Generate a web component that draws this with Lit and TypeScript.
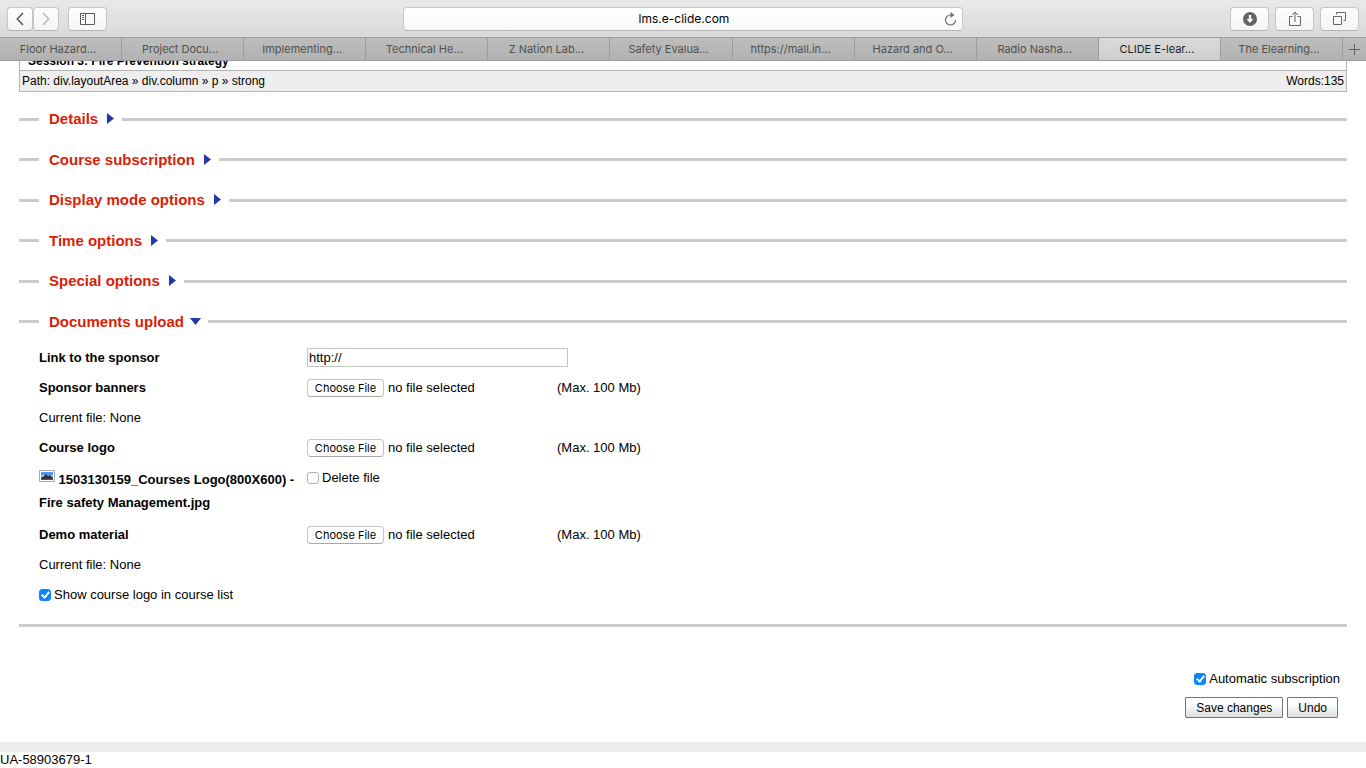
import { LitElement, html, css, svg } from "lit";
import { customElement, property } from "lit/decorators.js";

const tabs = [
  "Floor Hazard...",
  "Project Docu...",
  "Implementing...",
  "Technical He...",
  "Z Nation Lab...",
  "Safety Evalua...",
  "https://mall.in...",
  "Hazard and O...",
  "Radio Nasha...",
  "CLIDE E-lear...",
  "The Elearning...",
];
const activeTab = 9;

const sections = [
  "Details",
  "Course subscription",
  "Display mode options",
  "Time options",
  "Special options",
  "Documents upload",
];

@customElement("browser-bar")
export class BrowserBar extends LitElement {
  static styles = css`
    :host {
      display: block;
      font-family: Inter, Roboto, sans-serif;
    }
    .toolbar {
      display: grid;
      grid-template-columns: 1fr minmax(0, 560px) 1fr;
      align-items: center;
      box-sizing: border-box;
      height: 37px;
      padding: 0 7px;
      background: linear-gradient(#e9e9e9, #d9d9d9);
    }
    .group {
      display: flex;
      gap: 9px;
    }
    .pair {
      display: flex;
    }
    .right {
      justify-content: flex-end;
      gap: 6px;
    }
    .btn {
      display: flex;
      align-items: center;
      justify-content: center;
      box-sizing: border-box;
      width: 39px;
      height: 24px;
      margin: 0;
      padding: 0;
      border: 1px solid #c6c6c6;
      border-bottom-color: #b4b4b4;
      border-radius: 4px;
      background: linear-gradient(#fefefe, #f4f4f4);
    }
    .narrow {
      width: 26px;
    }
    .address {
      display: grid;
      grid-template-columns: 24px 1fr 24px;
      align-items: center;
      box-sizing: border-box;
      height: 24px;
      border: 1px solid #c8c8c8;
      border-bottom-color: #b4b4b4;
      border-radius: 4px;
      background: linear-gradient(#ffffff, #f8f8f8);
    }
    .url {
      grid-column: 2;
      min-width: 0;
      padding: 0 0 0 2px;
      border: 0;
      outline: 0;
      background: none;
      color: #000;
      font: 12px/16px Inter, sans-serif;
      text-align: center;
    }
    .reload {
      display: flex;
      justify-content: center;
      padding: 0;
      border: 0;
      background: none;
    }
    .tabs {
      display: flex;
      box-sizing: border-box;
      height: 24px;
      border-top: 1px solid #a2a2a2;
      border-bottom: 1px solid #9c9c9c;
      background: linear-gradient(#bdbdbd, #b2b2b2);
    }
    .tab {
      flex: 1;
      min-width: 0;
      padding: 0 5px 0 0;
      border: 0;
      border-right: 1px solid #9d9d9d;
      background: none;
      color: #505050;
      font: 11px/22px Inter, sans-serif;
      text-align: center;
      white-space: nowrap;
    }
    .active {
      background: linear-gradient(#d9d9d9, #cfcfcf);
      color: #1c1c1c;
    }
    .add {
      display: flex;
      align-items: center;
      justify-content: center;
      width: 23px;
      padding: 0;
      border: 0;
      background: none;
    }
  `;

  render() {
    return html`
      <div class="toolbar">
        <div class="group">
          <div class="pair">
            <button class="btn narrow" aria-label="Back">
              <svg width="8" height="14" fill="none" stroke="#565656" stroke-width="1.5"><path d="M7 1 1.3 7 7 13" /></svg>
            </button>
            <button class="btn narrow" aria-label="Forward">
              <svg width="8" height="14" fill="none" stroke="#bababa" stroke-width="1.5"><path d="M1 1 6.7 7 1 13" /></svg>
            </button>
          </div>
          <button class="btn" aria-label="Show sidebar">
            <svg width="15" height="12" fill="none" stroke="#5a5a5a"><path d="M.5.5h14v11H.5zM5.5.5v11M2 2.5h2M2 4.5h2M2 6.5h2" /></svg>
          </button>
        </div>
        <div class="address">
          <input class="url" type="text" aria-label="Address" value="lms.e-clide.com" />
          <button class="reload" aria-label="Reload">
            <svg width="13" height="14" fill="none" stroke="#707070" stroke-width="1.2"><path d="M7 3H6.500a5 5 0 1 0 5 5" /><path d="M6.500 0v6l4-3z" fill="#707070" stroke="none" /></svg>
          </button>
        </div>
        <div class="group right">
          <button class="btn" aria-label="Downloads">
            <svg width="14" height="14"><circle cx="7" cy="7" r="7" fill="#636363" /><path d="M5.8 3h2.4v4h2.3L7 10.9 3.5 7h2.3z" fill="#fff" /></svg>
          </button>
          <button class="btn" aria-label="Share">
            <svg width="12" height="16" fill="none" stroke="#666"><path d="M3.5 5.5h-3v9h11v-9h-3M6 11V1.5M3 4l3-3 3 3" /></svg>
          </button>
          <button class="btn" aria-label="Show all tabs">
            <svg width="13" height="13" fill="none" stroke="#666"><path d="M.5 4.5h8v8h-8zM3.5 2.5v-2h9v8h-2" /></svg>
          </button>
        </div>
      </div>
      <div class="tabs" role="tablist">
        ${tabs.map(
          (t, i) => html`<button class="tab ${i === activeTab ? "active" : ""}" role="tab" aria-selected=${i === activeTab}>${t}</button>`
        )}
        <button class="add" aria-label="New tab">
          <svg width="11" height="11" stroke="#606060"><path d="M5.5 0v11M0 5.5h11" /></svg>
        </button>
      </div>
    `;
  }
}

@customElement("section-heading")
export class SectionHeading extends LitElement {
  @property() label = "";
  @property({ type: Boolean }) open = false;

  static styles = css`
    :host {
      display: block;
    }
    .heading {
      display: flex;
      align-items: center;
      margin: 0;
    }
    .heading::before,
    .heading::after {
      content: "";
      height: 3px;
      background: #ccc;
    }
    .heading::before {
      width: 20px;
    }
    .heading::after {
      flex: 1;
    }
    .toggle {
      display: flex;
      align-items: center;
      gap: 4px;
      padding: 0 4px 0 10px;
      border: 0;
      background: none;
      color: #d81e05;
      font: bold 15px/18px "Liberation Sans", Arial, sans-serif;
      white-space: nowrap;
    }
  `;

  render() {
    return html`
      <h2 class="heading">
        <button class="toggle" aria-expanded=${this.open}>
          ${this.label}
          <svg width="16" height="16" fill="#2138a6">
            ${this.open ? svg`<path d="M2 4h11L7.5 11z" />` : svg`<path d="M5 2v11l7-5.500z" />`}
          </svg>
        </button>
      </h2>
    `;
  }
}

@customElement("app-root")
export class AppRoot extends LitElement {
  static styles = css`
    :host {
      display: block;
      min-height: 100vh;
      background: #fff;
      color: #000;
      font: 13px/16px "Liberation Sans", Arial, sans-serif;
    }
    .content {
      padding: 0 19px;
    }
    .editor {
      border: 1px solid #b5b5b5;
      border-top: 0;
      font-size: 12px;
    }
    .editor-text {
      display: flex;
      align-items: flex-end;
      box-sizing: border-box;
      height: 9px;
      overflow: hidden;
      padding: 0 0 1px 8px;
      font-weight: bold;
    }
    .editor-path {
      display: flex;
      justify-content: space-between;
      padding: 2px;
      border-top: 1px solid #b5b5b5;
      background: #eee;
    }
    .sections {
      display: grid;
      grid-auto-rows: 1fr;
      align-items: center;
      min-height: 243px;
      margin-top: 7px;
    }
    .form {
      display: grid;
      grid-template-columns: 258px 240px 1fr;
      column-gap: 10px;
      row-gap: 14px;
      align-items: start;
      margin-top: 8px;
      padding: 0 20px 21px;
      border-bottom: 3px solid #ccc;
    }
    .label {
      grid-column: 1;
      font-weight: bold;
    }
    .plain {
      grid-column: 1;
    }
    .logo-name {
      grid-column: 1;
      margin: -2px 0 -1px;
      font-weight: bold;
      line-height: 23px;
    }
    .thumb {
      vertical-align: 2px;
    }
    .link {
      box-sizing: border-box;
      width: 261px;
      height: 19px;
      margin: -2px 0 -1px;
      padding: 0 1px;
      border: 1px solid #c5c5c5;
      font: inherit;
    }
    .file {
      display: flex;
      align-items: center;
      gap: 4px;
      height: 16px;
    }
    .picker {
      width: 77px;
      font-size: 0;
    }
    .picker::file-selector-button {
      box-sizing: border-box;
      width: 77px;
      height: 18px;
      margin: 0;
      padding: 0;
      border: 1px solid #c4c4c4;
      border-bottom-color: #a9a9a9;
      border-radius: 4px;
      background: #fff;
      color: #000;
      font: 11px/14px Inter, sans-serif;
    }
    .check {
      display: flex;
      align-items: center;
      gap: 3px;
    }
    .box {
      display: grid;
      place-items: center;
      box-sizing: border-box;
      width: 12px;
      height: 12px;
      margin: 0;
      appearance: none;
      border: 1px solid #b0b0b0;
      border-radius: 3px;
      background: #fff;
    }
    .box:checked {
      border-color: #0d86fb;
      background: #0d86fb;
    }
    .box:checked::before {
      content: "";
      box-sizing: border-box;
      width: 5px;
      height: 8px;
      border: solid #fff;
      border-width: 0 2px 2px 0;
      transform: translateY(-1px) rotate(40deg);
    }
    .actions {
      display: flex;
      flex-direction: column;
      align-items: flex-end;
      gap: 10px;
      padding: 44px 7px 24px;
    }
    .buttons {
      display: flex;
      gap: 4px;
      padding-right: 2px;
    }
    .action {
      box-sizing: border-box;
      height: 21px;
      padding: 0 10px;
      border: 1px solid #757575;
      border-radius: 1px;
      background: linear-gradient(#fff 30%, #dcdfdf);
      color: #000;
      font: 12px/16px "Liberation Sans", Arial, sans-serif;
    }
    .footer {
      border-top: 10px solid #eee;
    }
  `;

  private fileRow(id: string, label: string) {
    return html`
      <label class="label" for=${id}>${label}</label>
      <div class="file"><input class="picker" id=${id} type="file" /><span>no file selected</span></div>
      <span>(Max. 100 Mb)</span>
    `;
  }

  render() {
    return html`
      <browser-bar></browser-bar>
      <main class="content">
        <div class="editor">
          <div class="editor-text">Session 3: Fire Prevention strategy</div>
          <div class="editor-path"><span>Path: div.layoutArea » div.column » p » strong</span><span>Words:135</span></div>
        </div>
        <div class="sections">
          ${sections.map((s, i) => html`<section-heading label=${s} ?open=${i === sections.length - 1}></section-heading>`)}
        </div>
        <form class="form">
          <label class="label" for="link">Link to the sponsor</label>
          <input class="link" id="link" type="text" value="http://" />
          ${this.fileRow("banner", "Sponsor banners")}
          <span class="plain">Current file: None</span>
          ${this.fileRow("logo", "Course logo")}
          <span class="logo-name">
            <svg class="thumb" width="16" height="12"><path d="M.5.5h15v11H.5z" fill="#fff" stroke="#a8a8a8" /><path d="M2 2h12v8H2z" fill="#4f9bea" /><path d="M2 5h12v2H2z" fill="#a9d0f5" /><path d="M2 8 5 6 7 4l2 2 2-1 3 3v1H2z" fill="#3a2f3c" /><path d="M2 9h12v1H2z" fill="#2c5f9e" /></svg>
            1503130159_Courses Logo(800X600) - Fire safety Management.jpg</span>
          <label class="check"><input class="box" type="checkbox" />Delete file</label>
          ${this.fileRow("demo", "Demo material")}
          <span class="plain">Current file: None</span>
          <label class="check plain"><input class="box" type="checkbox" checked />Show course logo in course list</label>
        </form>
        <div class="actions">
          <label class="check"><input class="box" type="checkbox" checked />Automatic subscription</label>
          <div class="buttons">
            <button class="action">Save changes</button>
            <button class="action">Undo</button>
          </div>
        </div>
      </main>
      <footer class="footer">UA-58903679-1</footer>
    `;
  }
}
